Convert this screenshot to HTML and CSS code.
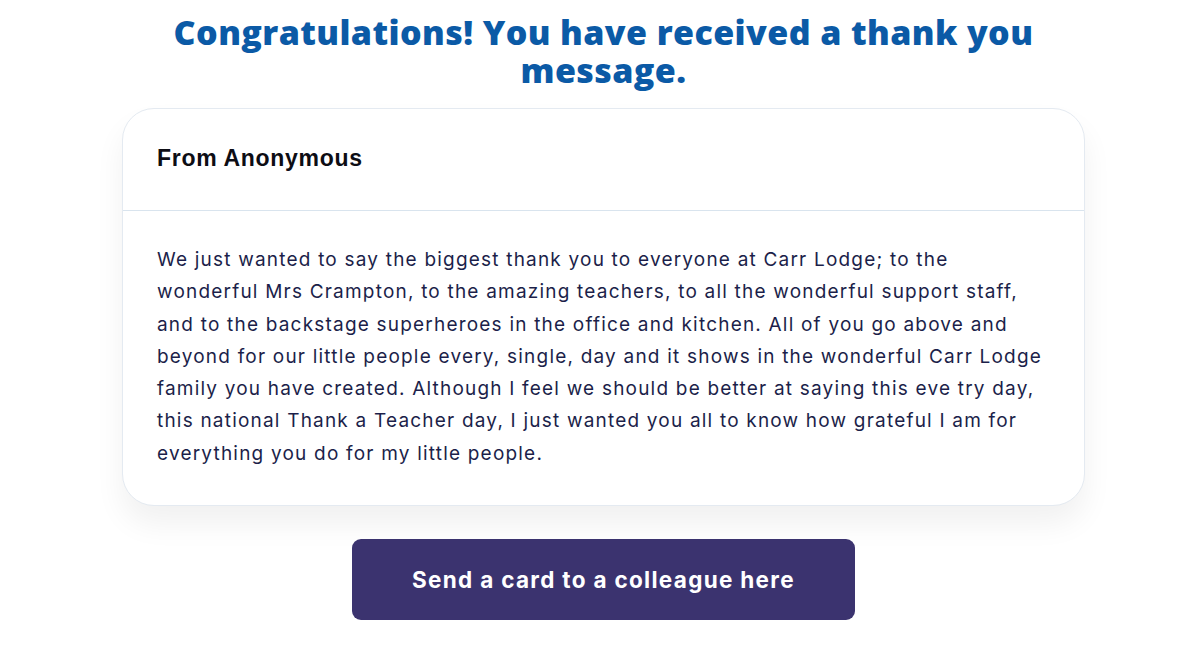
FILE: index.html
```html
<!DOCTYPE html>
<html lang="en">
<head>
<meta charset="utf-8">
<title>Thank you message</title>
<link rel="stylesheet" href="styles.css">
</head>
<body>
<main class="page">
  <h1 class="title">Congratulations! You have received a thank you message.</h1>
  <section class="card">
    <div class="card-head">From Anonymous</div>
    <div class="card-body">
      <p><span class="ln">We just wanted to say the biggest thank you to everyone at Carr Lodge; to the</span>
<span class="ln">wonderful Mrs Crampton, to the amazing teachers, to all the wonderful support staff,</span>
<span class="ln">and to the backstage superheroes in the office and kitchen. All of you go above and</span>
<span class="ln">beyond for our little people every, single, day and it shows in the wonderful Carr Lodge</span>
<span class="ln">family you have created. Although I feel we should be better at saying this eve try day,</span>
<span class="ln">this national Thank a Teacher day, I just wanted you all to know how grateful I am for</span>
<span class="ln">everything you do for my little people.</span></p>
    </div>
  </section>
  <div class="actions">
    <a class="btn" href="#">Send a card to a colleague here</a>
  </div>
</main>
</body>
</html>
```

FILE: styles.css
```css
* { box-sizing: border-box; }
html, body { margin: 0; padding: 0; background: #ffffff; }
body { font-family: "Inter", "Open Sans", sans-serif; padding-left: 7px; }
.page {
  width: 963px;
  margin: 0 auto;
  display: flex;
  flex-direction: column;
  align-items: stretch;
  padding-top: 13px;
}
.title {
  margin: 0 30px;
  text-align: center;
  color: #0b5aa6;
  font-family: "Open Sans", sans-serif;
  font-weight: 800;
  font-size: 34px;
  line-height: 38px;
  letter-spacing: 0.4px;
}
.card {
  margin-top: 19px;
  border: 1px solid #e4eaf1;
  border-radius: 32px;
  background: #fff;
  box-shadow: 0 18px 30px rgba(0,0,0,0.06);
}
.card-head {
  padding: 35px 35px 0 34px;
  height: 102px;
  border-bottom: 1px solid #d9e4ee;
  font-family: "Liberation Sans", Arial, sans-serif;
  font-weight: 700;
  font-size: 23px;
  line-height: 28px;
  letter-spacing: 0.7px;
  color: #0d0d14;
}
.card-body {
  padding: 33px 35px 35px 34px;
}
.card-body p {
  margin: 0;
  font-size: 19px;
  line-height: 32.3px;
  color: #1c1f4a;
  letter-spacing: 1.2px;
}
.ln { display: block; white-space: nowrap; }
.actions {
  display: flex;
  justify-content: center;
  margin-top: 33px;
}
.btn {
  width: 503px;
  height: 81px;
  display: flex;
  align-items: center;
  justify-content: center;
  background: #3b336f;
  border-radius: 9px;
  color: #fff;
  text-decoration: none;
  font-family: "Inter", sans-serif;
  font-weight: 700;
  font-size: 22.5px;
  letter-spacing: 1.3px;
}
```
